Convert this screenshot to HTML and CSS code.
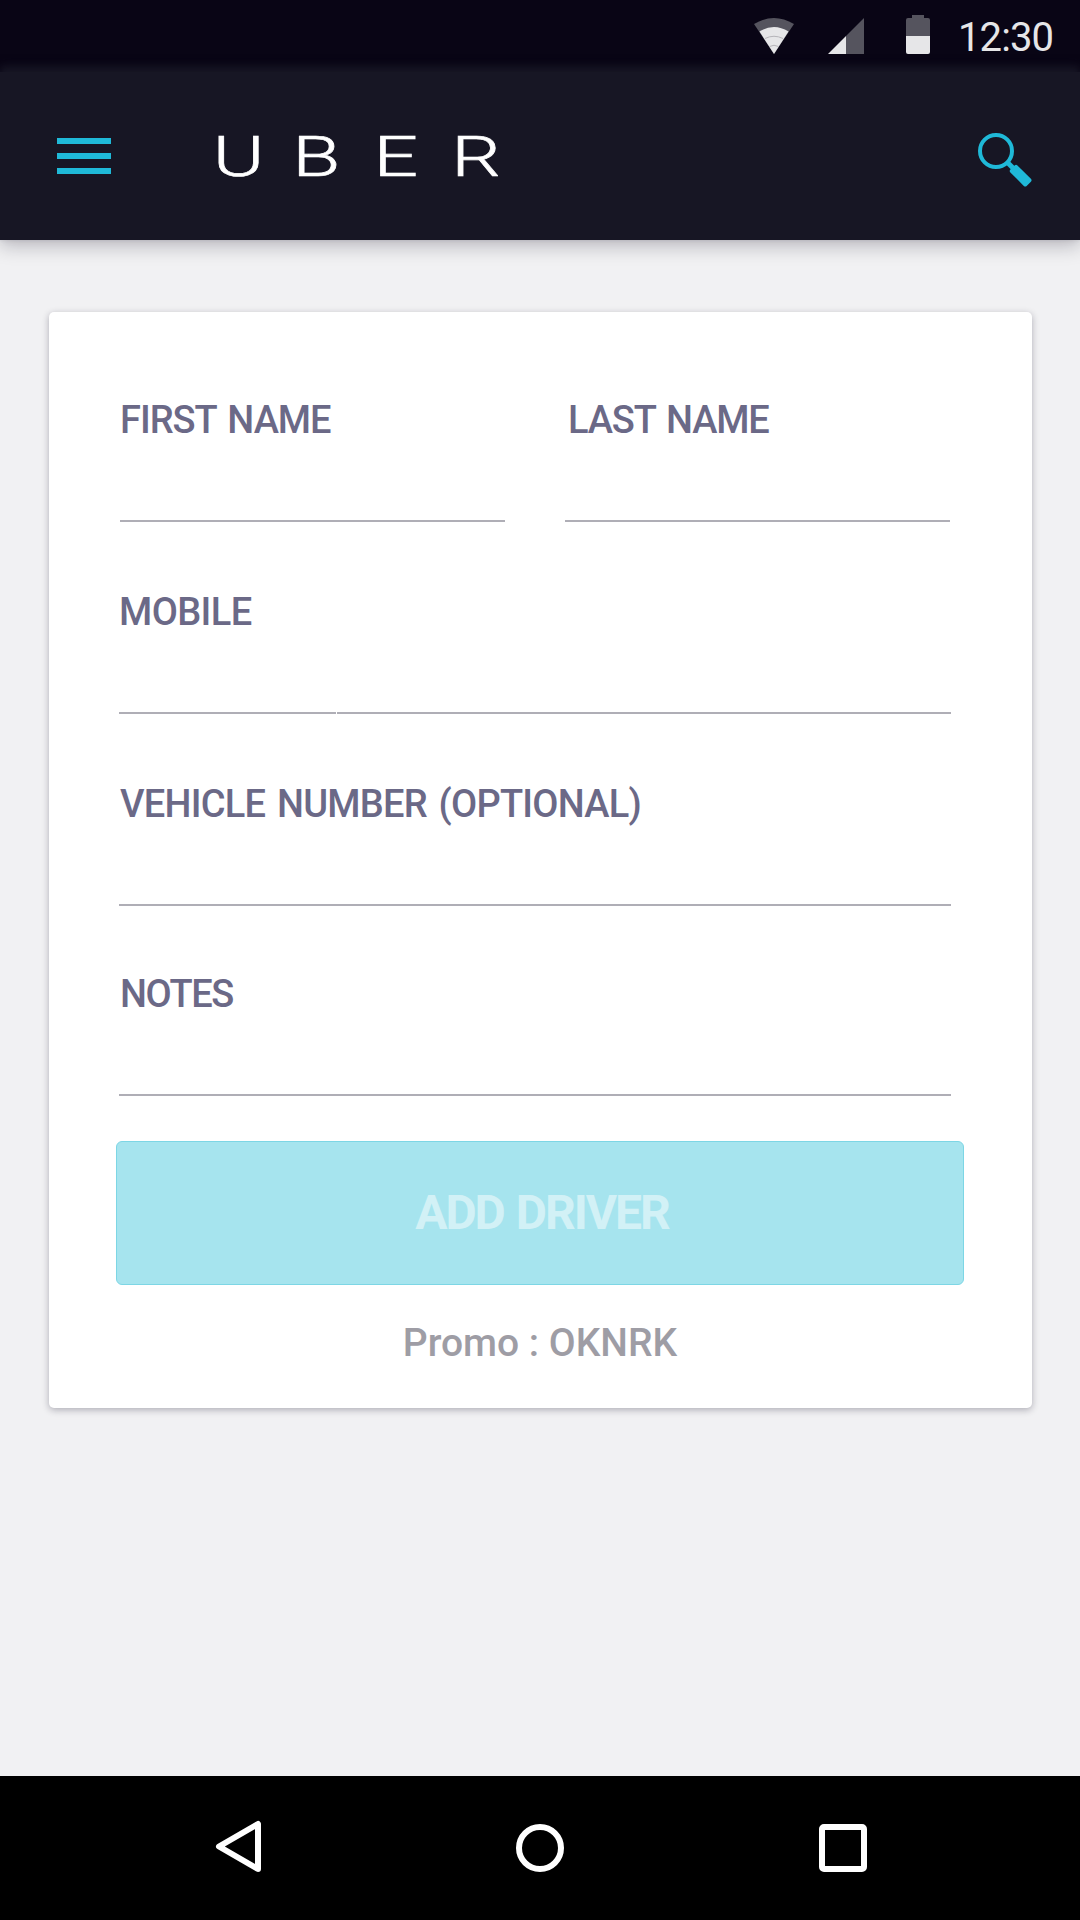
FILE: index.html
```html
<!DOCTYPE html>
<html lang="en">
<head>
<meta charset="utf-8">
<title>Add driver</title>
<link rel="stylesheet" href="styles.css">
</head>
<body>
<div class="screen">
  <div class="status-bar">
    <svg class="icon-wifi" width="42" height="38" viewBox="0 0 42 38">
      <path fill="#55545e" d="M21 37 1 7Q21-5 41 7Z"/>
      <path fill="#e6e6e8" d="M21 37 6.500 14.500Q21 5.500 35.500 14.500Z"/>
      <path fill="none" stroke="#b5b4b9" stroke-width="1" d="M12 21.500Q21 17 30 21.500M16.500 29.500Q21 27 25.500 29.500"/>
    </svg>
    <svg class="icon-signal" width="36" height="36" viewBox="0 0 36 36">
      <path fill="#55545e" d="M18 18 36 0V36H18Z"/>
      <path fill="#e6e6e8" d="M0 36 18 18V36Z"/>
    </svg>
    <svg class="icon-battery" width="24" height="39" viewBox="0 0 24 39">
      <path fill="#55545e" d="M6 0H18V3H22Q24 3 24 5V21H0V5Q0 3 2 3H6Z"/>
      <path fill="#e6e6e8" d="M0 21H24V37Q24 39 22 39H2Q0 39 0 37Z"/>
    </svg>
    <span class="clock">12:30</span>
  </div>

  <header class="app-bar">
    <button class="menu" aria-label="Menu"><span></span><span></span><span></span></button>
    <svg class="brand" width="300" height="56" viewBox="0 0 300 56" role="img">
      <text transform="translate(0 48) scale(1.4 1)" x="-3 53.800 111.800 167.400" y="0">UBER</text>
    </svg>
    <svg class="search" width="56" height="56" viewBox="0 0 56 56" fill="none" stroke="#1fb9d8">
      <circle cx="19" cy="19" r="16" stroke-width="4"/>
      <path stroke-width="5" d="M30 30 38 38"/>
      <rect x="-5" y="0" width="10" height="23" rx="2" fill="#1fb9d8" stroke="none" transform="translate(35.500 35.500) rotate(-45)"/>
    </svg>
  </header>

  <main class="content">
    <form class="card">
      <div class="row">
        <label class="field"><span class="name first">FIRST NAME</span><input type="text"></label>
        <label class="field"><span class="name last">LAST NAME</span><input type="text"></label>
      </div>
      <label class="field"><span class="name mobile">MOBILE</span>
        <span class="split"><input class="code" type="text"><input class="number" type="text"></span>
      </label>
      <label class="field"><span class="name vehicle">VEHICLE NUMBER (OPTIONAL)</span><input type="text"></label>
      <label class="field notes-field"><span class="name notes">NOTES</span><input type="text"></label>
      <button class="submit" type="button">ADD DRIVER</button>
      <p class="promo">Promo : OKNRK</p>
    </form>
  </main>

  <nav class="nav-bar">
    <svg width="54" height="60" viewBox="0 0 54 60" fill="none" stroke="#fff" stroke-width="6" stroke-linejoin="round"><path d="M9 28.500 48 6V51Z"/></svg>
    <svg width="54" height="60" viewBox="0 0 54 60" fill="none" stroke="#fff" stroke-width="6"><circle cx="27" cy="30" r="21"/></svg>
    <svg width="54" height="60" viewBox="0 0 54 60" fill="none" stroke="#fff" stroke-width="6"><rect x="6" y="9" width="42" height="42" rx="2"/></svg>
  </nav>
</div>
</body>
</html>
```
FILE: styles.css
```css
* {
  box-sizing: border-box;
}

body {
  margin: 0;
  font-family: Roboto, "Liberation Sans", sans-serif;
}

button,
input {
  margin: 0;
  padding: 0;
  border: 0;
  border-radius: 0;
  background: none;
  font-family: inherit;
}

.screen {
  display: flex;
  flex-direction: column;
  width: 1080px;
  height: 1920px;
  background: #f1f1f3;
  overflow: hidden;
}

.status-bar {
  display: flex;
  justify-content: flex-end;
  align-items: flex-start;
  height: 72px;
  padding: 15px 25px 0 0;
  background: #090515;
  color: #e6e6e8;
}

.icon-wifi {
  margin: 2px 33px 0 0;
}

.icon-signal {
  margin: 3px 42px 0 0;
}

.icon-battery {
  margin-right: 28px;
}

.clock {
  width: 97px;
  padding-top: 1px;
  font-size: 40px;
  line-height: 44px;
  letter-spacing: -0.9px;
  white-space: nowrap;
}

.app-bar {
  display: flex;
  align-items: flex-start;
  height: 168px;
  padding: 56px 47px 0 57px;
  background: #171624;
  box-shadow: 0 -6px 8px #171624, 0 6px 18px rgba(10, 5, 25, .24);
  position: relative;
}

.menu {
  display: flex;
  flex-direction: column;
  gap: 9px;
  width: 54px;
  margin-top: 10px;
}

.menu span {
  height: 6px;
  background: #1fb9d8;
}

.brand {
  margin-left: 106px;
  overflow: visible;
  font-size: 56px;
  font-weight: 300;
  fill: #fff;
  stroke: #fff;
  stroke-width: .6px;
}

.search {
  margin: 4px 0 0 auto;
}

.content {
  flex: 1;
  padding: 72px 48px 0 49px;
}

.card {
  display: flex;
  flex-direction: column;
  gap: 68px;
  height: 1096px;
  padding: 86px 81px 0 70px;
  border-radius: 5px;
  background: #fff;
  box-shadow: 0 2px 7px rgba(20, 15, 40, .3);
}

.row {
  display: grid;
  grid-template-columns: 385px 385px;
  column-gap: 60px;
  margin-left: 1px;
}

.field {
  display: flex;
  flex-direction: column;
  height: 124px;
}

.name {
  height: 44px;
  font-size: 38px;
  font-weight: 500;
  line-height: 44px;
  word-spacing: 3px;
  white-space: nowrap;
  color: #6b6987;
}

.first {
  letter-spacing: -1px;
}

.last {
  padding-left: 3px;
  letter-spacing: -1.15px;
}

.mobile {
  letter-spacing: -.6px;
}

.vehicle {
  padding-left: 1px;
  letter-spacing: -.75px;
}

.notes {
  padding-left: 1px;
  letter-spacing: -1.4px;
}

.field input {
  width: 100%;
  height: 80px;
  border-bottom: 2px solid #afaeb6;
}

.split {
  display: flex;
  gap: 1px;
}

.field .code {
  width: 217px;
}

.field .number {
  flex: 1;
}

.notes-field {
  margin-top: -2px;
}

.submit {
  width: 848px;
  height: 144px;
  margin: -23px 0 0 -3px;
  padding: 0 0 2px 4px;
  border: 1px solid #7dd6e5;
  border-radius: 6px;
  background: #a6e4ee;
  font-size: 48px;
  font-weight: 700;
  letter-spacing: -2px;
  word-spacing: 2px;
  color: #d2f1f6;
}

.promo {
  align-self: center;
  margin: -32px 0 0 10px;
  font-size: 39px;
  font-weight: 500;
  line-height: 44px;
  white-space: nowrap;
  color: #9e9da5;
}

.nav-bar {
  display: flex;
  justify-content: center;
  gap: 249px;
  height: 144px;
  padding-top: 42px;
  background: #000;
}
```
